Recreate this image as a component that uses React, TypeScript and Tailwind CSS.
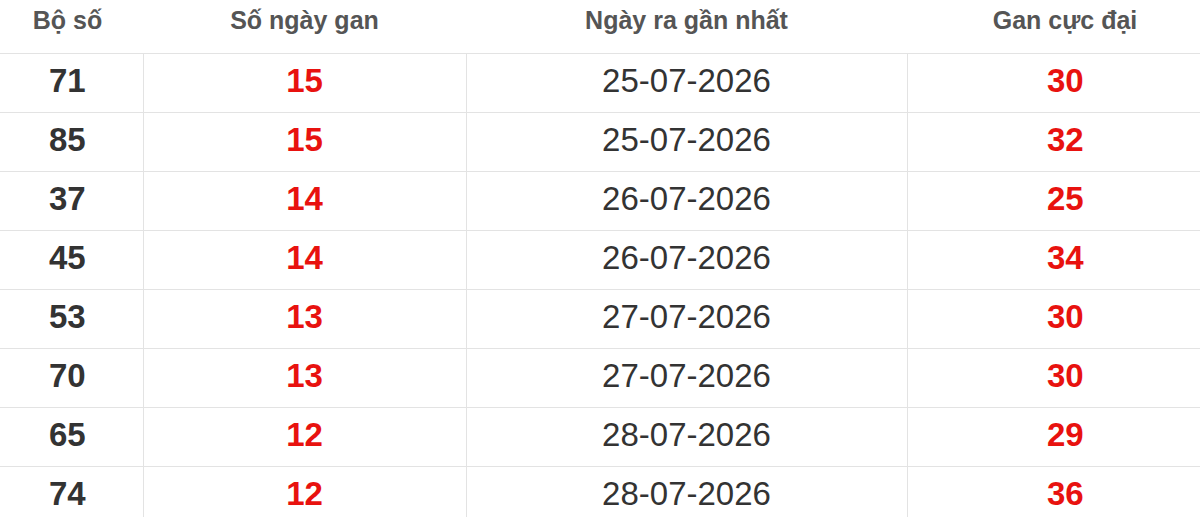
const rows = [
  { so: '71', gan: '15', ngay: '25-07-2026', max: '30' },
  { so: '85', gan: '15', ngay: '25-07-2026', max: '32' },
  { so: '37', gan: '14', ngay: '26-07-2026', max: '25' },
  { so: '45', gan: '14', ngay: '26-07-2026', max: '34' },
  { so: '53', gan: '13', ngay: '27-07-2026', max: '30' },
  { so: '70', gan: '13', ngay: '27-07-2026', max: '30' },
  { so: '65', gan: '12', ngay: '28-07-2026', max: '29' },
  { so: '74', gan: '12', ngay: '28-07-2026', max: '36' },
]

export default function App() {
  return (
    <div className="w-[1200px] h-[517px] overflow-hidden bg-white font-['Liberation_Sans',Arial,sans-serif]">
      <table className="ml-[-8px] w-[1231px] table-fixed border-collapse">
        <colgroup>
          <col className="w-[151px]" />
          <col className="w-[323px]" />
          <col className="w-[441px]" />
          <col className="w-[316px]" />
        </colgroup>
        <thead>
          <tr className="h-[53px] border-b border-[#e3e3e3] text-[25px] font-bold text-[#555]">
            <th className="pb-[12px] text-center">Bộ số</th>
            <th className="pb-[12px] text-center">Số ngày gan</th>
            <th className="pb-[12px] text-center">Ngày ra gần nhất</th>
            <th className="pb-[12px] text-center">Gan cực đại</th>
          </tr>
        </thead>
        <tbody>
          {rows.map(r => (
            <tr key={r.so} className="h-[59px] border-b border-[#e3e3e3] text-[33px]">
              <td className="pb-[4px] text-center font-bold text-[#333]">{r.so}</td>
              <td className="border-l border-[#e3e3e3] pb-[4px] text-center font-bold text-[#e8120f]">{r.gan}</td>
              <td className="border-l border-[#e3e3e3] pb-[4px] text-center text-[#333]">{r.ngay}</td>
              <td className="border-l border-[#e3e3e3] pb-[4px] text-center font-bold text-[#e8120f]">{r.max}</td>
            </tr>
          ))}
        </tbody>
      </table>
    </div>
  )
}
